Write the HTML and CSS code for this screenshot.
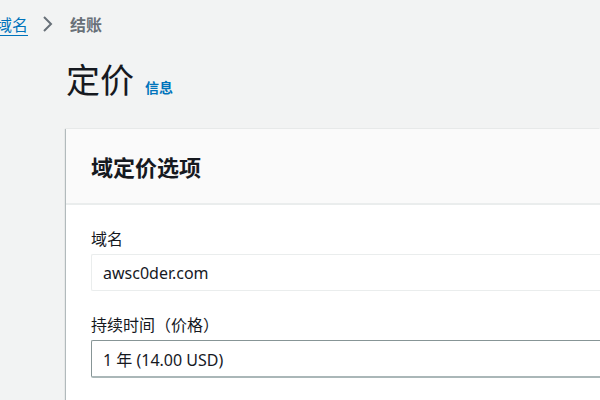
FILE: index.html
```html
<!DOCTYPE html>
<html lang="zh-CN">
<head>
<meta charset="utf-8">
<link rel="stylesheet" href="styles.css">
</head>
<body>
<nav class="crumbs">
  <a class="crumb-link" href="#">域名</a>
  <svg class="chev" width="12" height="18" viewBox="0 0 12 18"><path d="M2 2 L9 9 L2 16" fill="none" stroke="#687078" stroke-width="2"/></svg>
  <span class="crumb-current">结账</span>
</nav>
<header class="page-head">
  <h1 class="title">定价</h1>
  <a class="info" href="#">信息</a>
</header>
<section class="card">
  <div class="card-head">
    <h2 class="card-title">域定价选项</h2>
  </div>
  <div class="card-body">
    <div class="field">
      <label class="label">域名</label>
      <div class="input readonly">awsc0der.com</div>
    </div>
    <div class="field">
      <label class="label">持续时间（价格）</label>
      <div class="input select">1 年 (14.00 USD)</div>
    </div>
  </div>
</section>
</body>
</html>
```
FILE: styles.css
```css
html, body {
  margin: 0;
  padding: 0;
  background: #f2f3f3;
  font-family: "Noto Sans", "Noto Sans CJK SC", sans-serif;
  color: #16191f;
  overflow: hidden;
}
.crumbs {
  display: flex;
  align-items: center;
  height: 48px;
  margin-left: -4px;
  font-size: 16px;
}
.crumb-link {
  color: #0073bb;
  text-decoration: underline;
  text-underline-offset: 4px;
}
.chev {
  margin: 0 16px 0 14px;
}
.crumb-current {
  color: #687078;
  font-weight: 700;
}
.page-head {
  display: flex;
  align-items: baseline;
  padding-left: 66px;
  margin-top: 10px;
  height: 71px;
}
.title {
  margin: 0;
  font-size: 34px;
  font-weight: 400;
  line-height: 44px;
}
.info {
  margin-left: 11px;
  color: #0073bb;
  font-size: 14px;
  font-weight: 700;
  text-decoration: none;
}
.card {
  margin-left: 66px;
  background: #fff;
  box-shadow: -1px 0 1px rgba(0,28,36,0.25), 0 1px 1px rgba(0,28,36,0.1);
}
.card-head {
  background: #fafafa;
  border-bottom: 2px solid #eaeded;
  height: 74px;
  display: flex;
  align-items: center;
  padding-left: 25px;
}
.card-title {
  margin: 0;
  font-size: 22px;
  font-weight: 700;
}
.card-body {
  padding: 22px 0 60px 25px;
}
.field {
  margin-bottom: 22px;
}
.label {
  display: block;
  font-size: 16px;
  line-height: 24px;
  margin-bottom: 3px;
}
.input {
  height: 37px;
  box-sizing: border-box;
  border: 1px solid #eaeded;
  border-right: none;
  border-radius: 2px 0 0 2px;
  padding-left: 11px;
  display: flex;
  align-items: center;
  font-size: 16px;
}
.select {
  height: 38px;
  border: 1px solid #879596;
  border-bottom: 2px solid #aab7b8;
  border-right: none;
}
```
